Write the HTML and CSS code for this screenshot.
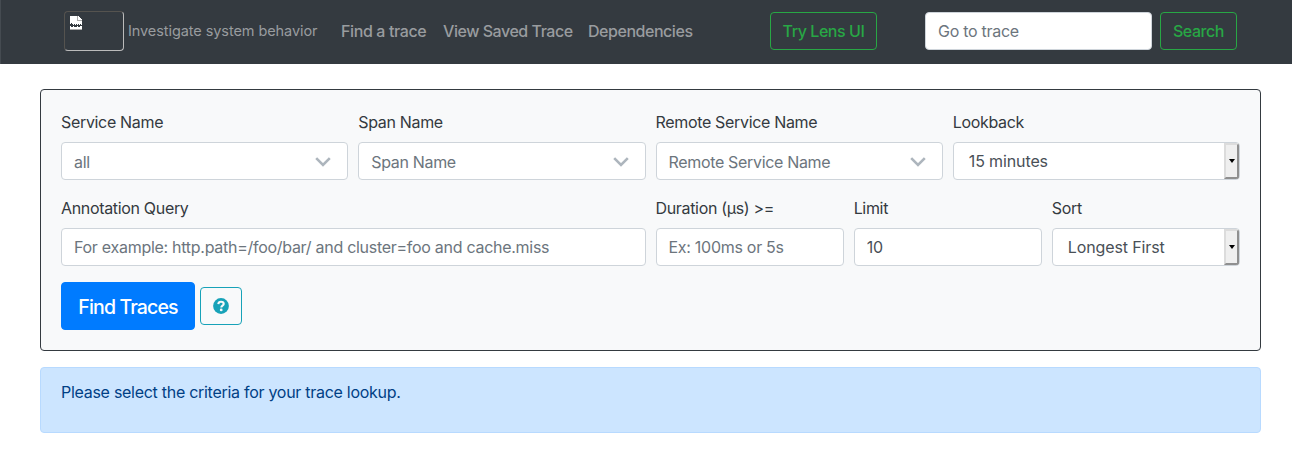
FILE: index.html
```
<!DOCTYPE html>
<html lang="en">
<head>
<meta charset="utf-8">
<title>Zipkin - Find a trace</title>
<link rel="stylesheet" href="styles.css">
</head>
<body>
<nav class="navbar">
  <span class="brand-image">
    <svg width="12" height="14" viewBox="0 0 12 14" shape-rendering="crispEdges">
      <path fill="#fff" d="M0 0h8l4 4v5h-1v-1h-1v1h-1v-1h-1v1h-1v-1h-1v1h-1v-1h-1v1h-1v-1h-1v-1h-1v1h-1z"/>
      <path fill="#fff" d="M0 10h1v1h2v-1h1v1h3v-1h1v1h2v-1h2v4h-12z"/>
      <path fill="none" stroke="#aaa" d="M7.5 0v4.5h4.5M0 13.5h12"/>
    </svg>
  </span>
  <span class="tagline">Investigate system behavior</span>
  <a class="nav-link find">Find a trace</a>
  <a class="nav-link saved">View Saved Trace</a>
  <a class="nav-link deps">Dependencies</a>
  <button class="btn btn-success lens">Try Lens UI</button>
  <form class="trace-search">
    <input class="control trace-id" type="text" placeholder="Go to trace">
    <button class="btn btn-success search" type="button">Search</button>
  </form>
</nav>
<main class="content">
  <section class="panel">
    <div class="fields">
      <div class="field quarter">
        <label class="label">Service Name</label>
        <div class="control chosen"><span>all</span><svg class="chevron" width="16" height="10" viewBox="0 0 16 10"><path d="M1.2 1.2 8 8l6.800-6.800"/></svg></div>
      </div>
      <div class="field quarter">
        <label class="label">Span Name</label>
        <div class="control chosen"><span>Span Name</span><svg class="chevron" width="16" height="10" viewBox="0 0 16 10"><path d="M1.2 1.2 8 8l6.800-6.800"/></svg></div>
      </div>
      <div class="field quarter">
        <label class="label">Remote Service Name</label>
        <div class="control chosen"><span>Remote Service Name</span><svg class="chevron" width="16" height="10" viewBox="0 0 16 10"><path d="M1.2 1.2 8 8l6.800-6.800"/></svg></div>
      </div>
      <div class="field quarter">
        <label class="label">Lookback</label>
        <div class="control select"><span>15 minutes</span><i class="arrow"></i></div>
      </div>
      <div class="field half">
        <label class="label">Annotation Query</label>
        <input class="control" type="text" placeholder="For example: http.path=/foo/bar/ and cluster=foo and cache.miss">
      </div>
      <div class="field sixth">
        <label class="label">Duration (μs) &gt;=</label>
        <input class="control" type="text" placeholder="Ex: 100ms or 5s">
      </div>
      <div class="field sixth">
        <label class="label">Limit</label>
        <input class="control" type="text" value="10">
      </div>
      <div class="field sixth">
        <label class="label">Sort</label>
        <div class="control select"><span>Longest First</span><i class="arrow"></i></div>
      </div>
    </div>
    <div class="actions">
      <button class="btn btn-primary">Find Traces</button>
      <button class="btn btn-info" aria-label="Help">
        <svg width="16" height="16" viewBox="0 0 16 16"><circle cx="8" cy="8" r="7.900" fill="#17a2b8"/><path d="M5.300 6.200C5.500 4.600 6.600 3.800 8 3.800c1.500 0 2.700.9 2.700 2.200C10.700 7.800 8.300 7.600 8.300 9.400" fill="none" stroke="#f8f9fa" stroke-width="2.100"/><circle cx="8.200" cy="11.900" r="1.400" fill="#f8f9fa"/></svg>
      </button>
    </div>
  </section>
  <div class="alert">Please select the criteria for your trace lookup.</div>
</main>
</body>
</html>
```
FILE: styles.css
```
* { box-sizing: border-box; }
body {
  margin: 0;
  background: #fff;
  color: #343a40;
  font: 400 16px/24px Inter, "Liberation Sans", sans-serif;
  letter-spacing: -0.28px;
}
.navbar {
  display: flex;
  align-items: center;
  height: 64px;
  padding: 0 55px 2px 63px;
  background: #343a40;
  border-left: 1px solid #454b51;
  white-space: nowrap;
}
.brand-image {
  width: 60px;
  height: 40px;
  padding: 4px 5px;
  border: 1px solid;
  border-color: #55534f #bbb #bbb #55534f;
  border-radius: 4px;
  line-height: 0;
}
.tagline { width: 189px; margin-left: 4px; color: #999c9f; font-size: 14.500px; letter-spacing: -0.08px; }
.nav-link { color: #999c9f; font-weight: 500; letter-spacing: -0.46px; }
.find { width: 86px; margin-left: 24px; letter-spacing: -0.38px; }
.saved { width: 129px; margin-left: 16px; }
.deps { width: 104px; margin-left: 16px; }
.btn {
  display: flex;
  align-items: center;
  justify-content: center;
  height: 38px;
  padding: 0;
  border: 1px solid;
  border-radius: 4px;
  background: transparent;
  font: inherit;
  letter-spacing: inherit;
  white-space: nowrap;
}
.btn-success { color: #28a745; border-color: #28a745; font-weight: 500; letter-spacing: -0.43px; }
.lens { width: 107px; margin-left: 78px; }
.trace-search { display: flex; gap: 8px; margin-left: 48px; }
.trace-search .trace-id { width: 227px; }
.search { width: 77px; }
.content { padding: 25px 31px 0 40px; }
.panel {
  height: 262px;
  padding: 20px;
  background: #f8f9fa;
  border: 1px solid #343a40;
  border-radius: 4px;
}
.fields {
  display: grid;
  grid-template-columns: repeat(12, minmax(0, 1fr));
  gap: 16px 10px;
}
.quarter { grid-column: span 3; }
.half { grid-column: span 6; }
.sixth { grid-column: span 2; }
.label { display: block; height: 24px; margin-bottom: 8px; letter-spacing: -0.33px; }
.field { height: 70px; }
.control {
  display: flex;
  align-items: center;
  width: 100%;
  height: 38px;
  padding: 0 12px;
  background: #fff;
  color: #495057;
  border: 1px solid #ced4da;
  border-radius: 4px;
  font: inherit;
  letter-spacing: inherit;
}
.control::placeholder { color: #6c757d; opacity: 1; }
.chosen { justify-content: space-between; padding: 2px 16px 0 12px; color: #6c757d; letter-spacing: -0.33px; }
.chevron { fill: none; stroke: #adb5bd; stroke-width: 2.600; }
.select { justify-content: space-between; padding: 0 0 0 15px; overflow: hidden; letter-spacing: -0.12px; }
.arrow {
  display: flex;
  align-items: center;
  justify-content: center;
  width: 15px;
  height: 36px;
  background: #efefef;
  border: 2px solid;
  border-color: #dcdcdc #8f8f8f #8f8f8f #dcdcdc;
}
.arrow::after { content: ""; border: 3.500px solid transparent; border-top: 4px solid #000; border-bottom: 0; }
.actions { display: flex; align-items: center; gap: 5px; margin-top: 16px; }
.btn-primary { width: 134px; height: 48px; padding-top: 2px; background: #007bff; border-color: #007bff; color: #fff; font-size: 19.500px; font-weight: 500; letter-spacing: -0.85px; }
.btn-info { width: 42px; border-color: #17a2b8; }
.alert {
  height: 66px;
  margin-top: 16px;
  padding: 12px 20px;
  color: #004085;
  background: #cce5ff;
  border: 1px solid #b8daff;
  border-radius: 4px;
}
```
